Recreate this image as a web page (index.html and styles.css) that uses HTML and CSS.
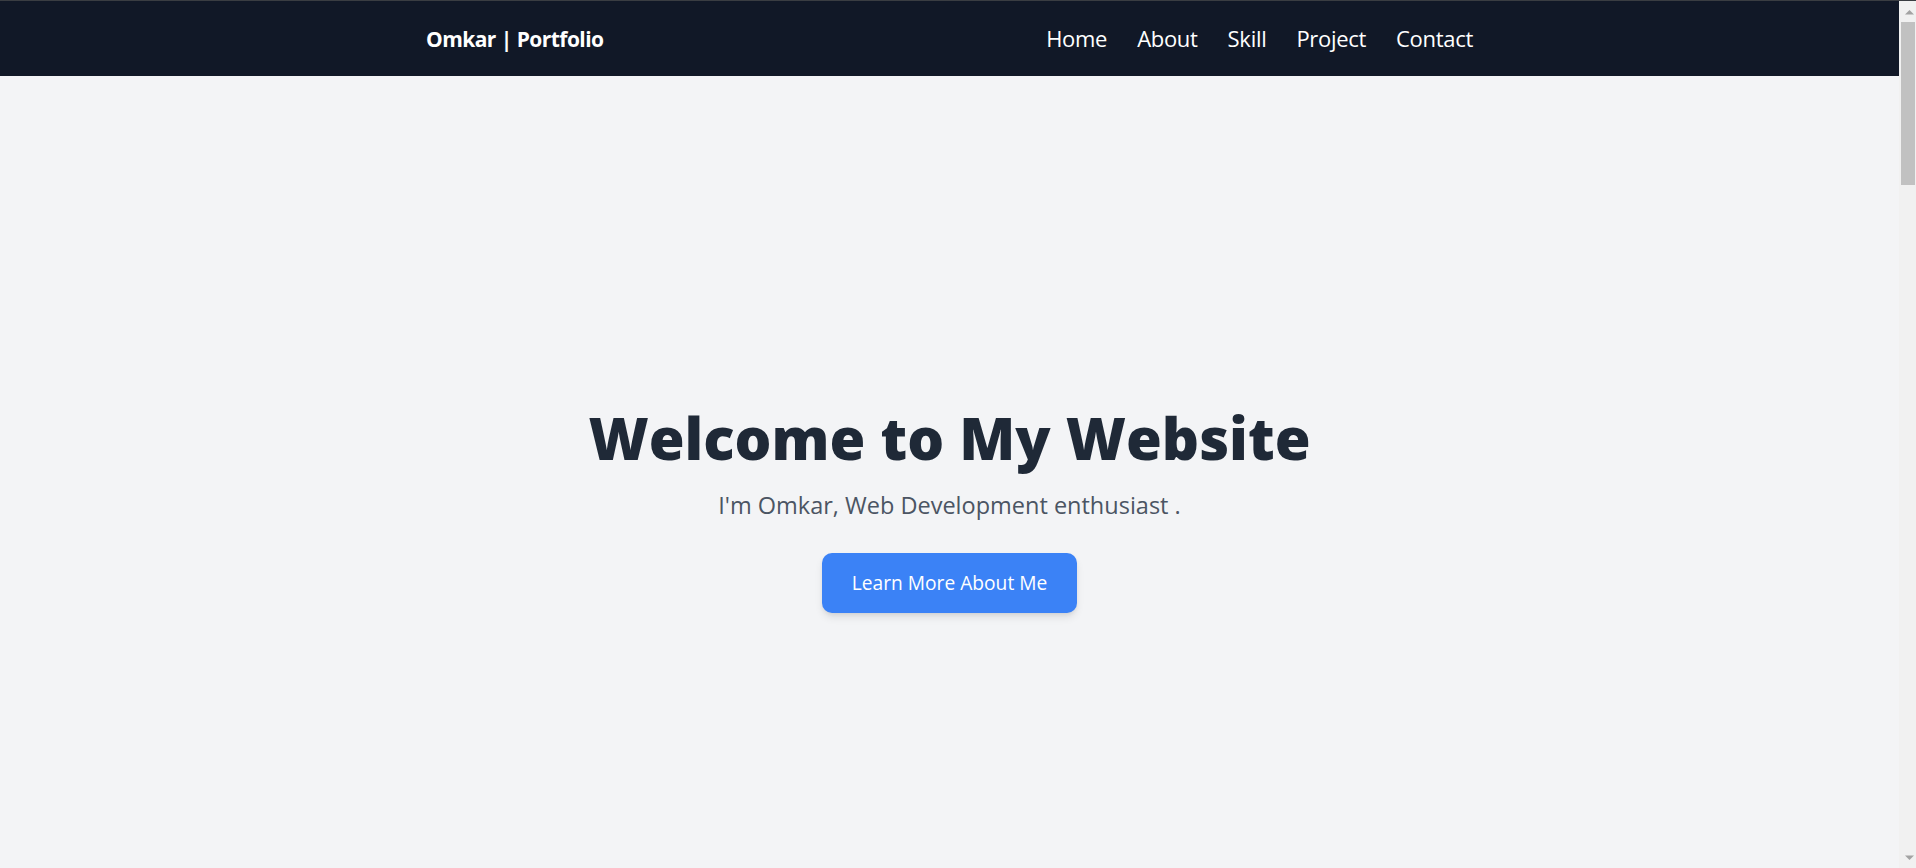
FILE: index.html
```html
<!DOCTYPE html>
<html lang="en">
<head>
<meta charset="UTF-8">
<title>Omkar | Portfolio</title>
<link rel="stylesheet" href="styles.css">
</head>
<body>
<div class="page">
  <header class="navbar">
    <div class="container nav-inner">
      <a class="logo" href="#home">Omkar | Portfolio</a>
      <nav class="nav-links">
        <a href="#home">Home</a>
        <a href="#about">About</a>
        <a href="#skill">Skill</a>
        <a href="#project">Project</a>
        <a href="#contact">Contact</a>
      </nav>
    </div>
  </header>

  <main>
    <section class="hero" id="home">
      <div class="hero-content">
        <h1 class="hero-title">Welcome to My Website</h1>
        <p class="hero-subtitle">I'm Omkar, Web Development enthusiast .</p>
        <a class="btn" href="#about">Learn More About Me</a>
      </div>
    </section>
  </main>
</div>

<aside class="scrollbar" aria-hidden="true">
  <svg class="sb-arrow" width="17" height="21" viewBox="0 0 17 21">
    <polygon points="6,13.5 15,13.5 10.5,9" fill="#a3a3a3"/>
  </svg>
  <div class="sb-track">
    <div class="sb-thumb"></div>
  </div>
  <svg class="sb-arrow" width="17" height="17" viewBox="0 0 17 17">
    <polygon points="6,4.5 15,4.5 10.5,9" fill="#a3a3a3"/>
  </svg>
</aside>
</body>
</html>
```

FILE: styles.css
```css
* {
  box-sizing: border-box;
}

html,
body {
  background: #f3f4f6;
}

body {
  margin: 0;
  border-top: 1px solid #3a3d42;
  font-family: "Open Sans", "Noto Sans", "Liberation Sans", sans-serif;
  color: #1f2937;
  display: grid;
  grid-template-columns: 1fr 17px;
  overflow-x: hidden;
}

a {
  text-decoration: none;
  color: inherit;
}

.page {
  min-width: 0;
}

.container {
  max-width: 1047px;
  margin: 0 auto;
}

.navbar {
  background: #111827;
  height: 75px;
}

.nav-inner {
  height: 100%;
  display: flex;
  align-items: center;
  justify-content: space-between;
}

.logo {
  color: #ffffff;
  font-size: 21px;
  font-weight: 700;
  letter-spacing: -0.55px;
  line-height: 30px;
}

.nav-links {
  display: flex;
  gap: 30px;
}

.nav-links a {
  color: #ffffff;
  font-size: 22px;
  letter-spacing: -0.3px;
  line-height: 35px;
}

.hero {
  height: 100vh;
  display: flex;
  align-items: center;
  justify-content: center;
  text-align: center;
}

.hero-content {
  display: flex;
  flex-direction: column;
  align-items: center;
}

.hero-title {
  margin: 0 0 20px;
  font-size: 58px;
  line-height: 60px;
  font-weight: 800;
  color: #1f2937;
}

.hero-subtitle {
  margin: 0 0 30px;
  font-size: 23.5px;
  line-height: 35px;
  color: #4b5563;
}

.btn {
  display: inline-block;
  background: #3b82f6;
  color: #ffffff;
  font-size: 19.2px;
  line-height: 30px;
  padding: 15px 30px;
  border-radius: 10px;
  box-shadow: 0 5px 8px -1px rgba(0, 0, 0, 0.1), 0 2px 5px -2px rgba(0, 0, 0, 0.1);
}

.scrollbar {
  position: sticky;
  top: 0;
  align-self: start;
  height: calc(100vh - 1px);
  background: #f1f1f1;
  display: flex;
  flex-direction: column;
}

.sb-arrow {
  display: block;
  flex: none;
}

.sb-track {
  flex: 1;
}

.sb-thumb {
  height: 163px;
  margin: 0 1px 0 2px;
  background: #c1c1c1;
}
```
